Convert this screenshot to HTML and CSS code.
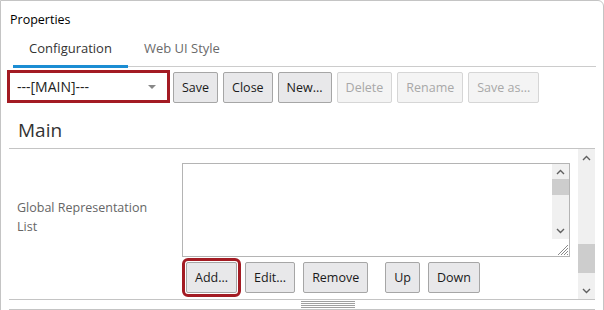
FILE: index.html
```html
<!DOCTYPE html>
<html lang="en">

<head>
    <meta charset="UTF-8">
    <title>Properties</title>
    <link rel="stylesheet" href="styles.css">
</head>

<body>
    <div class="panel">
        <div class="title">Properties</div>

        <div class="tabs">
            <div class="tab active">Configuration</div>
            <div class="tab">Web UI Style</div>
        </div>

        <div class="toolbar">
            <div class="select highlight">
                <span>---[MAIN]---</span>
                <span class="caret"></span>
            </div>
            <button class="btn">Save</button>
            <button class="btn">Close</button>
            <button class="btn">New...</button>
            <button class="btn" disabled>Delete</button>
            <button class="btn" disabled>Rename</button>
            <button class="btn" disabled>Save as...</button>
        </div>

        <div class="section">
            <h2 class="section-title">Main</h2>

            <div class="scroller">
                <div class="scroll-body">
                    <div class="field">
                        <div class="field-label">Global Representation List</div>
                        <div class="field-value">
                            <div class="textarea">
                                <div class="ta-body"></div>
                                <div class="ta-bar">
                                    <div class="arrow small">
                                        <svg width="9" height="6" viewBox="0 0 9 6"><path d="M1 5 L4.5 1.5 L8 5" fill="none" stroke="#606060" stroke-width="1.4"/></svg>
                                    </div>
                                    <div class="ta-track"><div class="ta-thumb"></div></div>
                                    <div class="arrow">
                                        <svg width="9" height="6" viewBox="0 0 9 6"><path d="M1 1 L4.5 4.5 L8 1" fill="none" stroke="#606060" stroke-width="1.4"/></svg>
                                    </div>
                                    <div class="corner">
                                        <svg width="14" height="14" viewBox="0 0 14 14">
                                            <path d="M13 3 L3 13 M13 6 L6 13 M13 9 L9 13 M13 12 L12 13" stroke="#8a8a8a" stroke-width="1"/>
                                        </svg>
                                    </div>
                                </div>
                            </div>
                            <div class="list-buttons">
                                <button class="btn highlight-btn">Add...</button>
                                <button class="btn">Edit...</button>
                                <button class="btn">Remove</button>
                                <button class="btn spaced">Up</button>
                                <button class="btn">Down</button>
                            </div>
                        </div>
                    </div>
                </div>

                <div class="vscroll">
                    <div class="arrow">
                        <svg width="9" height="6" viewBox="0 0 9 6"><path d="M1 5 L4.5 1.5 L8 5" fill="none" stroke="#606060" stroke-width="1.4"/></svg>
                    </div>
                    <div class="track"><div class="thumb"></div></div>
                    <div class="arrow">
                        <svg width="9" height="6" viewBox="0 0 9 6"><path d="M1 1 L4.5 4.5 L8 1" fill="none" stroke="#606060" stroke-width="1.4"/></svg>
                    </div>
                </div>
            </div>

            <div class="footer">
                <div class="grip"></div>
            </div>
        </div>
    </div>
</body>

</html>
```

FILE: styles.css
```css
body {
    margin: 0;
    background-color: #fff;
    font-family: 'Open Sans', 'Noto Sans', sans-serif;
    font-size: 12px;
    color: #000;
    overflow: hidden;
}

.panel {
    width: 602px;
    height: 330px;
    border: 1px solid #c4c4c4;
    border-radius: 0 6px 0 0;
}

.title {
    padding: 10px 0 0 9px;
    line-height: 18px;
    font-size: 12.5px;
}

.tabs {
    display: flex;
    margin: 0 7px 0 12px;
    border-bottom: 1px solid #cccccc;
}

.tab {
    padding: 9px 16px 7px 16px;
    line-height: 20px;
    font-size: 13px;
    color: #6a6a6a;
    border-bottom: 3px solid transparent;
    margin-bottom: -2px;
}

.tab.active {
    color: #333;
    border-bottom-color: #1b8dd3;
}

.toolbar {
    display: flex;
    align-items: flex-end;
    gap: 5px;
    padding-left: 6px;
    margin-top: 3px;
}

.select {
    width: 150px;
    height: 27px;
    padding-left: 7px;
    display: flex;
    align-items: center;
    justify-content: space-between;
    font-size: 14px;
    color: #222;
    margin-right: -2px;
}

.highlight {
    border: 3px solid #a31b23;
}

.caret {
    width: 0;
    height: 0;
    border-left: 4px solid transparent;
    border-right: 4px solid transparent;
    border-top: 4px solid #888;
    margin-right: 11px;
}

.btn {
    height: 31px;
    padding: 0 8px;
    font-family: inherit;
    font-size: 12.5px;
    color: #1a1a1a;
    background-color: #e8e8ea;
    border: 1px solid #a6a6a6;
    border-radius: 2px;
}

.btn:disabled {
    color: #a8a8a8;
    background-color: #f4f4f4;
    border-color: #d6d6d6;
}

.section {
    margin: 0 8px 0 8px;
}

.section-title {
    margin: 10px 0 0 0;
    padding-left: 9px;
    height: 35px;
    line-height: 35px;
    font-size: 19px;
    font-weight: normal;
    color: #333;
    border-bottom: 1px solid #c4c4c4;
}

.scroller {
    display: flex;
    height: 150px;
    border-bottom: 1px solid #c4c4c4;
}

.scroll-body {
    flex: 1;
    padding: 14px 0 0 8px;
}

.field {
    display: flex;
}

.field-label {
    width: 150px;
    margin-right: 15px;
    padding-top: 35px;
    line-height: 19px;
    color: #666;
    font-size: 12.5px;
}

.field-value {
    width: 388px;
}

.textarea {
    display: flex;
    height: 92px;
    border: 1px solid #b4b4b4;
}

.ta-body {
    flex: 1;
}

.ta-bar {
    width: 17px;
    display: flex;
    flex-direction: column;
}

.arrow {
    height: 17px;
    display: flex;
    align-items: center;
    justify-content: center;
    background-color: #f0f0f0;
}

.arrow.small {
    height: 15px;
}

.ta-track {
    height: 43px;
    background-color: #f0f0f0;
}

.ta-thumb {
    height: 16px;
    background-color: #cdcdcd;
}

.corner {
    height: 17px;
    display: flex;
    align-items: flex-end;
    justify-content: flex-end;
}

.list-buttons {
    display: flex;
    gap: 8px;
    margin: 5px 0 0 4px;
}

.highlight-btn {
    outline: 3px solid #a31b23;
    outline-offset: 1px;
}

.spaced {
    margin-left: 9px;
}

.vscroll {
    width: 17px;
    display: flex;
    flex-direction: column;
    background-color: #f0f0f0;
}

.track {
    flex: 1;
    padding-top: 78px;
}

.thumb {
    height: 29px;
    background-color: #cdcdcd;
}

.footer {
    height: 8px;
    border-bottom: 1px solid #c4c4c4;
}

.grip {
    margin-left: calc(50% - 1px);
    margin-top: 1px;
    width: 54px;
    height: 5px;
    border-top: 1px solid #a0a0a0;
    border-bottom: 1px solid #a0a0a0;
    background: linear-gradient(#fff 1px, #a0a0a0 1px, #a0a0a0 2px, #fff 2px);
    background-size: 100% 2px;
}
```
